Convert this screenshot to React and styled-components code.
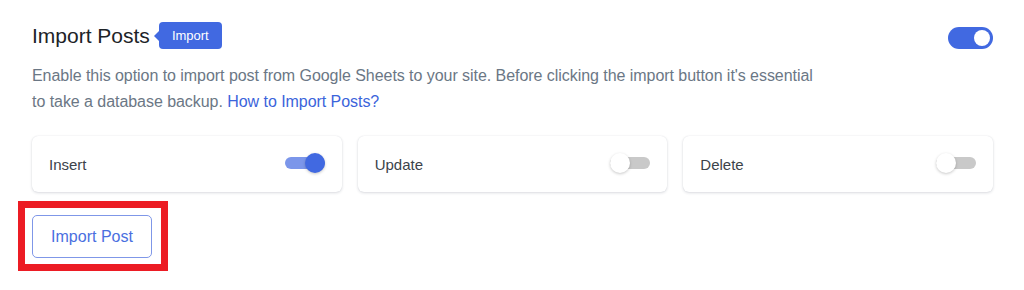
import React, { useState } from "react";
import styled, { createGlobalStyle } from "styled-components";

const GlobalStyle = createGlobalStyle`
  * { box-sizing: border-box; }
  body {
    margin: 0;
    background: #ffffff;
    font-family: "Liberation Sans", Arial, sans-serif;
  }
`;

const Page = styled.div`
  width: 1024px;
  height: 290px;
  padding: 22px 31px 0 32px;
  background: #ffffff;
`;

const Header = styled.div`
  display: flex;
  align-items: center;
  justify-content: space-between;
  height: 28px;
`;

const TitleWrap = styled.div`
  display: flex;
  align-items: center;
  gap: 9px;
`;

const Title = styled.h2`
  margin: 0;
  font-size: 21px;
  font-weight: 400;
  color: #1d2327;
  line-height: 28px;
`;

const Badge = styled.span`
  position: relative;
  display: inline-flex;
  align-items: center;
  height: 27px;
  padding: 0 13px;
  background: #4169e1;
  color: #ffffff;
  font-size: 13px;
  border-radius: 4px;
  margin-top: -1px;

  &::before {
    content: "";
    position: absolute;
    left: -5px;
    top: 50%;
    transform: translateY(-50%);
    border-top: 6px solid transparent;
    border-bottom: 6px solid transparent;
    border-right: 6px solid #4169e1;
  }
`;

const Track = styled.button`
  position: relative;
  flex: none;
  border: none;
  padding: 0;
  cursor: pointer;
  width: ${p => (p.large ? "45px" : "40px")};
  height: ${p => (p.large ? "22px" : "12px")};
  border-radius: 11px;
  background: ${p =>
    p.on ? (p.large ? "#4169e1" : "#7b96ea") : "#c9c9c9"};
  margin-top: ${p => (p.large ? "4px" : "-2px")};
`;

const Knob = styled.span`
  position: absolute;
  top: 50%;
  transform: translateY(-50%);
  width: ${p => (p.large ? "16px" : "20px")};
  height: ${p => (p.large ? "16px" : "20px")};
  border-radius: 50%;
  background: ${p => (p.on && !p.large ? "#4169e1" : "#ffffff")};
  box-shadow: ${p =>
    p.large ? "none" : "0 1px 3px rgba(0, 0, 0, 0.22)"};
  left: ${p =>
    p.on ? (p.large ? "26px" : "20px") : p.large ? "3px" : "0"};
`;

const Toggle = ({ on, large, onClick }) => (
  <Track on={on} large={large} onClick={onClick} aria-pressed={on}>
    <Knob on={on} large={large} />
  </Track>
);

const Description = styled.p`
  margin: 13px 0 0;
  font-size: 16px;
  letter-spacing: -0.05px;
  line-height: 26px;
  color: #6b7785;
  max-width: 790px;
`;

const Link = styled.a`
  color: #3b64db;
  text-decoration: none;
`;

const Cards = styled.div`
  display: grid;
  grid-template-columns: repeat(3, 1fr);
  gap: 16px;
  margin-top: 21px;
`;

const Card = styled.div`
  display: flex;
  align-items: center;
  justify-content: space-between;
  height: 56px;
  padding: 0 17px 0 17px;
  background: #ffffff;
  border-radius: 6px;
  box-shadow: 0 1px 3px rgba(30, 40, 70, 0.16), 0 0 1px rgba(30, 40, 70, 0.12);
`;

const CardLabel = styled.span`
  font-size: 15px;
  color: #3c434a;
`;

const Highlight = styled.div`
  display: inline-block;
  margin: 9px 0 0 -14px;
  padding: 7px 9px 6px 7px;
  border: 7px solid #ec1c24;
`;

const ImportButton = styled.button`
  display: block;
  width: 120px;
  height: 43px;
  background: #ffffff;
  border: 1px solid #7f97e8;
  border-radius: 5px;
  color: #4a6fdf;
  font-family: inherit;
  font-size: 16px;
  cursor: pointer;
`;

export default function App() {
  const [enabled, setEnabled] = useState(true);
  const [actions, setActions] = useState({
    Insert: true,
    Update: false,
    Delete: false
  });

  return (
    <Page>
      <GlobalStyle />
      <Header>
        <TitleWrap>
          <Title>Import Posts</Title>
          <Badge>Import</Badge>
        </TitleWrap>
        <Toggle large on={enabled} onClick={() => setEnabled(!enabled)} />
      </Header>
      <Description>
        Enable this option to import post from Google Sheets to your site.
        Before clicking the import button it's essential to take a database
        backup. <Link href="#">How to Import Posts?</Link>
      </Description>
      <Cards>
        {Object.keys(actions).map(name => (
          <Card key={name}>
            <CardLabel>{name}</CardLabel>
            <Toggle
              on={actions[name]}
              onClick={() => setActions({ ...actions, [name]: !actions[name] })}
            />
          </Card>
        ))}
      </Cards>
      <Highlight>
        <ImportButton>Import Post</ImportButton>
      </Highlight>
    </Page>
  );
}
